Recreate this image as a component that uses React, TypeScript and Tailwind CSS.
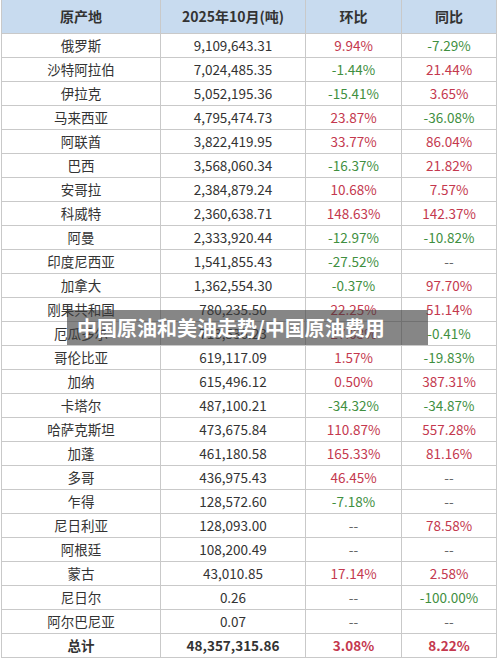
type Row = { origin: string; amount: string; mom: string; yoy: string };

const ROWS: Row[] = [
  { origin: '俄罗斯', amount: '9,109,643.31', mom: '9.94%', yoy: '-7.29%' },
  { origin: '沙特阿拉伯', amount: '7,024,485.35', mom: '-1.44%', yoy: '21.44%' },
  { origin: '伊拉克', amount: '5,052,195.36', mom: '-15.41%', yoy: '3.65%' },
  { origin: '马来西亚', amount: '4,795,474.73', mom: '23.87%', yoy: '-36.08%' },
  { origin: '阿联酋', amount: '3,822,419.95', mom: '33.77%', yoy: '86.04%' },
  { origin: '巴西', amount: '3,568,060.34', mom: '-16.37%', yoy: '21.82%' },
  { origin: '安哥拉', amount: '2,384,879.24', mom: '10.68%', yoy: '7.57%' },
  { origin: '科威特', amount: '2,360,638.71', mom: '148.63%', yoy: '142.37%' },
  { origin: '阿曼', amount: '2,333,920.44', mom: '-12.97%', yoy: '-10.82%' },
  { origin: '印度尼西亚', amount: '1,541,855.43', mom: '-27.52%', yoy: '--' },
  { origin: '加拿大', amount: '1,362,554.30', mom: '-0.37%', yoy: '97.70%' },
  { origin: '刚果共和国', amount: '780,235.50', mom: '22.25%', yoy: '51.14%' },
  { origin: '厄瓜多尔', amount: '713,536.23', mom: '27.03%', yoy: '-0.41%' },
  { origin: '哥伦比亚', amount: '619,117.09', mom: '1.57%', yoy: '-19.83%' },
  { origin: '加纳', amount: '615,496.12', mom: '0.50%', yoy: '387.31%' },
  { origin: '卡塔尔', amount: '487,100.21', mom: '-34.32%', yoy: '-34.87%' },
  { origin: '哈萨克斯坦', amount: '473,675.84', mom: '110.87%', yoy: '557.28%' },
  { origin: '加蓬', amount: '461,180.58', mom: '165.33%', yoy: '81.16%' },
  { origin: '多哥', amount: '436,975.43', mom: '46.45%', yoy: '--' },
  { origin: '乍得', amount: '128,572.60', mom: '-7.18%', yoy: '--' },
  { origin: '尼日利亚', amount: '128,093.00', mom: '--', yoy: '78.58%' },
  { origin: '阿根廷', amount: '108,200.49', mom: '--', yoy: '--' },
  { origin: '蒙古', amount: '43,010.85', mom: '17.14%', yoy: '2.58%' },
  { origin: '尼日尔', amount: '0.26', mom: '--', yoy: '-100.00%' },
  { origin: '阿尔巴尼亚', amount: '0.07', mom: '--', yoy: '--' },
];

function pctColor(v: string) {
  if (v === '--') return 'text-[#666]';
  return v.startsWith('-') ? 'text-[#3f8f3f]' : 'text-[#c4384e]';
}

const cell = 'border border-[#c9c9c9] text-center align-middle p-0';

export default function App() {
  return (
    <div
      className="relative w-[497px] h-[658px] overflow-hidden bg-white text-[#333] text-[13.5px]"
      style={{ fontFamily: '"Noto Sans CJK SC", "Noto Sans", sans-serif' }}
    >
      <table className="ml-px w-[495px] border-collapse table-fixed">
        <colgroup>
          <col className="w-[159px]" />
          <col className="w-[145px]" />
          <col className="w-[96px]" />
          <col className="w-[95px]" />
        </colgroup>
        <thead>
          <tr className="h-[33px] bg-[#c8dbef] font-bold text-[14px]">
            <th className={`${cell} border-t-0`}>原产地</th>
            <th className={`${cell} border-t-0`}>2025年10月(吨)</th>
            <th className={`${cell} border-t-0`}>环比</th>
            <th className={`${cell} border-t-0`}>同比</th>
          </tr>
        </thead>
        <tbody>
          {ROWS.map(r => (
            <tr key={r.origin} className="h-[24px]">
              <td className={cell}>{r.origin}</td>
              <td className={cell}>{r.amount}</td>
              <td className={`${cell} ${pctColor(r.mom)}`}>{r.mom}</td>
              <td className={`${cell} ${pctColor(r.yoy)}`}>{r.yoy}</td>
            </tr>
          ))}
          <tr className="h-[24px] font-bold">
            <td className={cell}>总计</td>
            <td className={cell}>48,357,315.86</td>
            <td className={`${cell} text-[#c4384e]`}>3.08%</td>
            <td className={`${cell} text-[#c4384e]`}>8.22%</td>
          </tr>
        </tbody>
      </table>

      {/* watermark caption */}
      <div className="absolute left-[67px] top-[310px] w-[361px] h-[35px] bg-[rgba(60,60,60,0.62)] flex items-center pl-[10px]">
        <span className="text-white font-bold text-[20px] leading-none">中国原油和美油走势/中国原油费用</span>
      </div>
    </div>
  );
}
